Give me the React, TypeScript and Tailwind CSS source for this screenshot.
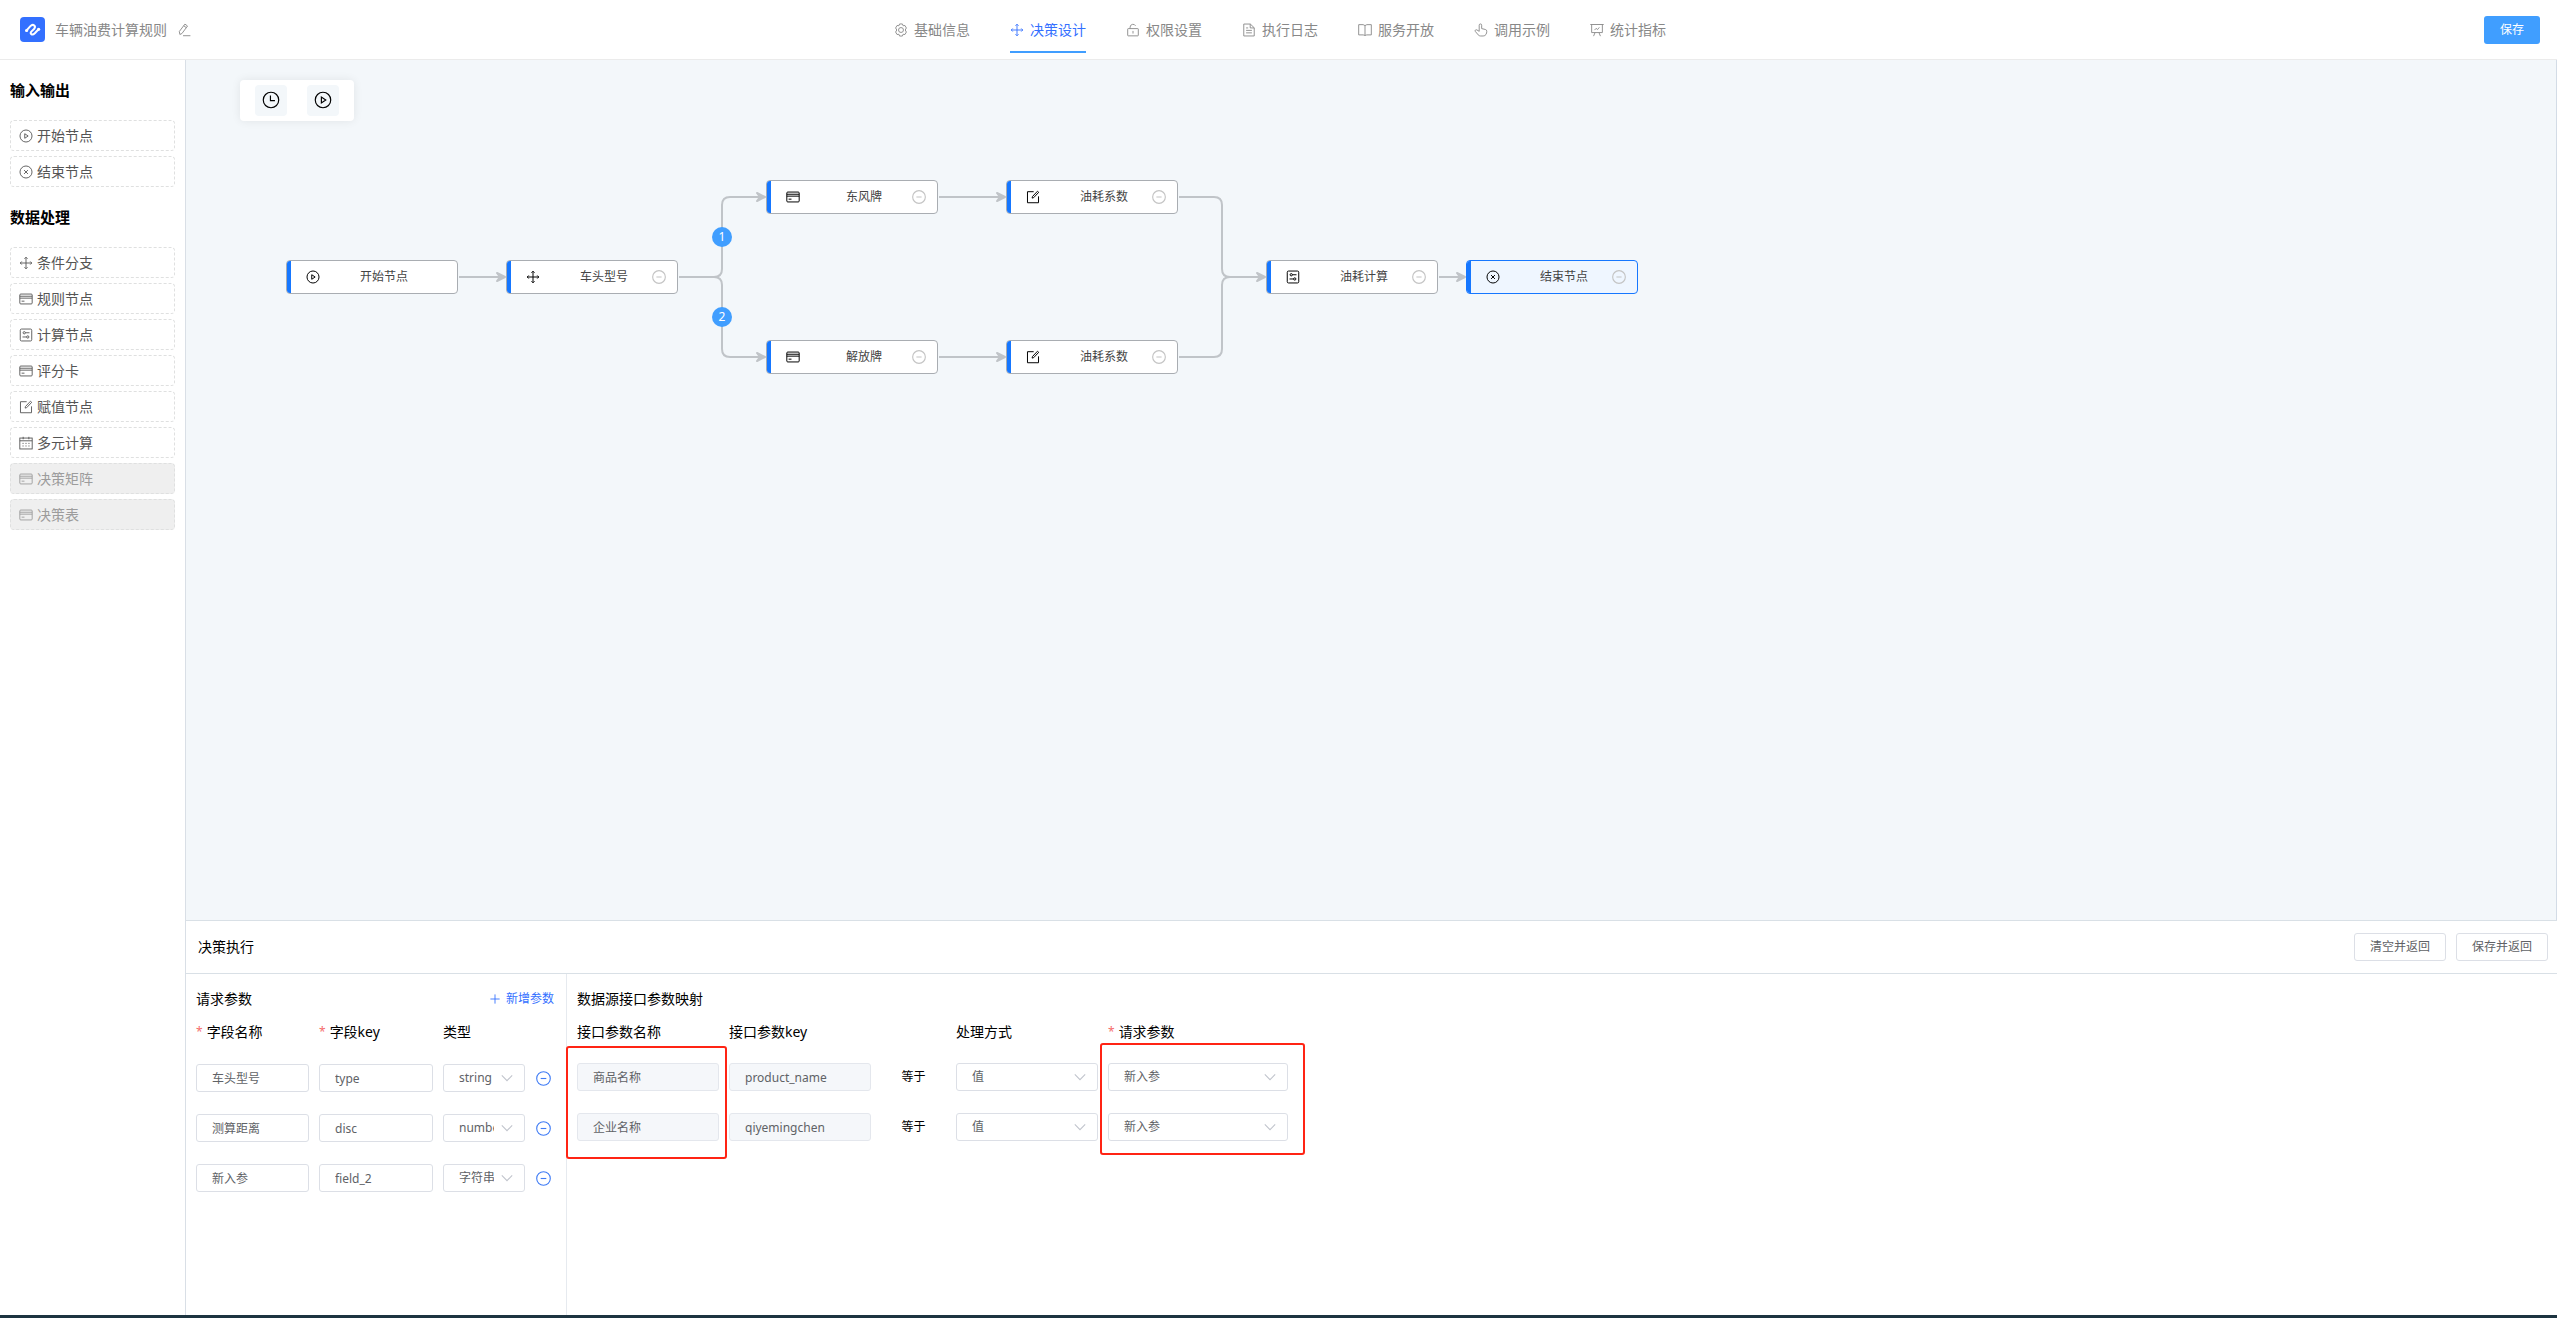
import React from 'react';

type IconName =
  | 'play' | 'close' | 'rank' | 'card' | 'setup' | 'edit' | 'date' | 'minus' | 'clock' | 'pen'
  | 'setting' | 'unlock' | 'document' | 'reading' | 'pointer' | 'board' | 'plus' | 'down';

const SHAPES: Record<IconName, React.ReactNode> = {
  play: (
    <>
      <circle cx="512" cy="512" r="440" />
      <path d="M420 346v332l249-166z" />
    </>
  ),
  close: (
    <>
      <circle cx="512" cy="512" r="440" />
      <path d="M370 370l284 284M654 370L370 654" />
    </>
  ),
  rank: (
    <path d="M512 100v824M100 512h824M400 200l112-112 112 112M400 824l112 112 112-112M200 400L88 512l112 112M824 400l112 112-112 112" />
  ),
  card: (
    <>
      <rect x="60" y="150" width="904" height="724" rx="70" />
      <path d="M60 310h904M60 450h904M190 670h210" />
    </>
  ),
  setup: (
    <>
      <rect x="92" y="76" width="840" height="872" rx="90" />
      <circle cx="384" cy="348" r="84" />
      <path d="M468 348h300M256 656h300" />
      <circle cx="640" cy="656" r="84" />
    </>
  ),
  edit: (
    <>
      <path d="M560 124H108v808h808V464" />
      <path d="M470 480L840 90l90 80-370 390-110 32z" />
    </>
  ),
  date: (
    <>
      <rect x="60" y="150" width="904" height="798" />
      <path d="M60 350h904M304 60v180M720 60v180" />
      <path d="M256 540h80M472 540h80M688 540h80M256 730h80M472 730h80M688 730h80" />
    </>
  ),
  minus: (
    <>
      <circle cx="512" cy="512" r="464" />
      <path d="M320 512h384" />
    </>
  ),
  clock: (
    <>
      <circle cx="512" cy="512" r="440" />
      <path d="M480 256v288h256" />
    </>
  ),
  pen: (
    <>
      <path d="M210 840L170 620 580 80l190 140-410 550zM490 200l190 140" />
      <path d="M440 930h540" />
    </>
  ),
  setting: (
    <>
      <path d="M410 70h204l50 130 140-16 102 180-86 148 86 148-102 180-140-16-50 130H410l-50-130-140 16-102-180 86-148-86-148 102-180 140 16z" />
      <circle cx="512" cy="512" r="180" />
    </>
  ),
  unlock: (
    <>
      <rect x="124" y="410" width="776" height="530" rx="40" />
      <path d="M300 410V300a212 212 0 0 1 400-90M512 580v190" />
    </>
  ),
  document: (
    <>
      <path d="M130 76h480l284 274v598H130z" />
      <path d="M600 76v284h294M300 360h150M300 540h424M300 720h424" />
    </>
  ),
  reading: (
    <path d="M512 190v720M512 190L380 120H50v750h330l132 40 132-40h330V120H644z" />
  ),
  pointer: (
    <path d="M380 610V160a90 90 0 0 1 180 0v250l270 64a130 130 0 0 1 104 136c0 160-70 340-260 340H490c-100 0-170-50-230-140L90 610c-40-70 40-150 120-105l170 105" />
  ),
  board: (
    <>
      <path d="M20 110h984M120 110v590h784V110M370 700L260 960M654 700l110 260" />
      <path d="M330 520l120-130 100 90 130-160" />
    </>
  ),
  plus: <path d="M512 40v944M40 512h944" />,
  down: <path d="M70 290l442 450 442-450" />,
};

function Icon({ name, className = 'size-3.5', weight = 66 }: { name: IconName; className?: string; weight?: number }) {
  return (
    <svg viewBox="0 0 1024 1024" fill="none" stroke="currentColor" strokeWidth={weight} className={`${className} shrink-0`} aria-hidden="true">
      {SHAPES[name]}
    </svg>
  );
}

const TABS: { icon: IconName; label: string }[] = [
  { icon: 'setting', label: '基础信息' },
  { icon: 'rank', label: '决策设计' },
  { icon: 'unlock', label: '权限设置' },
  { icon: 'document', label: '执行日志' },
  { icon: 'reading', label: '服务开放' },
  { icon: 'pointer', label: '调用示例' },
  { icon: 'board', label: '统计指标' },
];

function Header() {
  return (
    <header className="grid h-15 shrink-0 grid-cols-[1fr_auto_1fr] items-center border-b border-[#ebebeb] bg-white pr-[17px] pl-5">
      <div className="flex items-center">
        <svg viewBox="0 0 25 25" className="size-[25px]" aria-hidden="true">
          <rect width="25" height="25" rx="4" fill="#3370ff" />
          <path
            d="M6.6 13.4L10.4 9.2Q12.4 7 14.3 8.5Q15.8 9.9 14 12L11.3 14.6Q10 16.2 11.3 17.2Q12.8 18.2 14.8 16.2L18.6 12.2"
            fill="none" stroke="#fff" strokeWidth="2" strokeLinecap="round" strokeLinejoin="round"
          />
          <circle cx="6.6" cy="13.5" r="1.6" fill="#fff" />
          <circle cx="18.6" cy="12.3" r="1.6" fill="#fff" />
        </svg>
        <h1 className="ml-2.5 text-sm text-[#888]">车辆油费计算规则</h1>
        <button type="button" aria-label="编辑名称" className="ml-2.5 text-[#888]">
          <Icon name="pen" />
        </button>
      </div>
      <nav className="flex h-full gap-10">
        {TABS.map((t) => (
          <a
            key={t.label}
            href="#"
            className={
              t.label === '决策设计'
                ? 'relative flex items-center gap-1.5 text-sm text-[#3370ff] after:absolute after:inset-x-0 after:bottom-1.5 after:h-0.5 after:bg-[#409eff]'
                : 'flex items-center gap-1.5 text-sm text-[#888]'
            }
          >
            <Icon name={t.icon} />
            {t.label}
          </a>
        ))}
      </nav>
      <button type="button" className="h-7 justify-self-end rounded-[3px] bg-[#409eff] px-4 text-xs text-white">
        保存
      </button>
    </header>
  );
}

type Item = { icon: IconName; label: string; disabled?: boolean };

const IO_ITEMS: Item[] = [
  { icon: 'play', label: '开始节点' },
  { icon: 'close', label: '结束节点' },
];

const DATA_ITEMS: Item[] = [
  { icon: 'rank', label: '条件分支' },
  { icon: 'card', label: '规则节点' },
  { icon: 'setup', label: '计算节点' },
  { icon: 'card', label: '评分卡' },
  { icon: 'edit', label: '赋值节点' },
  { icon: 'date', label: '多元计算' },
  { icon: 'card', label: '决策矩阵', disabled: true },
  { icon: 'card', label: '决策表', disabled: true },
];

function Palette({ title, items }: { title: string; items: Item[] }) {
  return (
    <section>
      <h2 className="flex h-15 items-center text-[15px] font-bold text-black">{title}</h2>
      <ul className="flex flex-col gap-[5px]">
        {items.map((it) => (
          <li key={it.label} className="flex">
            <button
              type="button"
              disabled={it.disabled}
              className={
                it.disabled
                  ? 'flex h-[31px] w-full items-center gap-1 rounded border border-dashed border-[#dfe0e0] bg-[#efefef] pl-2 text-sm text-[#9c9c9c]'
                  : 'flex h-[31px] w-full items-center gap-1 rounded border border-dashed border-[#dfe0e0] bg-white pl-2 text-sm text-[#555]'
              }
            >
              <Icon name={it.icon} />
              {it.label}
            </button>
          </li>
        ))}
      </ul>
    </section>
  );
}

type FlowNode = { id: string; x: number; y: number; icon: IconName; label: string; removable: boolean; active?: boolean };

const NODES: FlowNode[] = [
  { id: 'start', x: 100, y: 200, icon: 'play', label: '开始节点', removable: false },
  { id: 'cond', x: 320, y: 200, icon: 'rank', label: '车头型号', removable: true },
  { id: 'rule1', x: 580, y: 120, icon: 'card', label: '东风牌', removable: true },
  { id: 'rule2', x: 580, y: 280, icon: 'card', label: '解放牌', removable: true },
  { id: 'set1', x: 820, y: 120, icon: 'edit', label: '油耗系数', removable: true },
  { id: 'set2', x: 820, y: 280, icon: 'edit', label: '油耗系数', removable: true },
  { id: 'calc', x: 1080, y: 200, icon: 'setup', label: '油耗计算', removable: true },
  { id: 'end', x: 1280, y: 200, icon: 'close', label: '结束节点', removable: true, active: true },
];

const EDGES = [
  'M273 217H314',
  'M493 217H528Q536 217 536 209V145Q536 137 544 137H574',
  'M493 217H528Q536 217 536 225V289Q536 297 544 297H574',
  'M753 137H814',
  'M753 297H814',
  'M993 137H1028Q1036 137 1036 145V209Q1036 217 1044 217H1074',
  'M993 297H1028Q1036 297 1036 289V225Q1036 217 1044 217H1074',
  'M1253 217H1274',
];

const ARROWS = [[320, 217], [580, 137], [580, 297], [820, 137], [820, 297], [1080, 217], [1280, 217]];

function NodeBox({ node }: { node: FlowNode }) {
  return (
    <div
      style={{ left: node.x, top: node.y }}
      className={
        node.active
          ? 'absolute flex h-[34px] w-[172px] items-center overflow-hidden rounded border border-[#1677ff] bg-[#eff6ff]'
          : 'absolute flex h-[34px] w-[172px] items-center overflow-hidden rounded border border-[#a9adb2] bg-white'
      }
    >
      <span className="h-full w-1 shrink-0 bg-[#1677ff]" />
      <span className="ml-[15px] flex text-black">
        <Icon name={node.icon} weight={72} />
      </span>
      <span className="ml-4 flex-1 text-center text-xs text-[#444]">{node.label}</span>
      <span className="mr-[11px] flex size-3.5">
        {node.removable && (
          <button type="button" aria-label={`删除${node.label}`} className="text-[#c4c4c4]">
            <Icon name="minus" weight={84} />
          </button>
        )}
      </span>
    </div>
  );
}

function Canvas() {
  return (
    <div className="relative min-h-0 flex-1 overflow-hidden border-r border-[#d3dce6] bg-[#f3f7fa]">
      <svg className="absolute inset-0 size-full" aria-hidden="true">
        <g fill="none" stroke="#c0c4c8" strokeWidth="2">
          {EDGES.map((d) => (
            <path key={d} d={d} />
          ))}
        </g>
        <g fill="#c0c4c8" stroke="#c0c4c8" strokeWidth="2" strokeLinejoin="round">
          {ARROWS.map(([x, y]) => (
            <path key={`${x}-${y}`} d={`M${x - 1} ${y}l-8 -4 3 4 -3 4z`} />
          ))}
        </g>
      </svg>
      {NODES.map((n) => (
        <NodeBox key={n.id} node={n} />
      ))}
      <span className="absolute top-[167px] left-[526px] flex size-5 items-center justify-center rounded-full bg-[#409eff] text-xs text-white">1</span>
      <span className="absolute top-[247px] left-[526px] flex size-5 items-center justify-center rounded-full bg-[#409eff] text-xs text-white">2</span>
      <div className="absolute top-5 left-[54px] flex gap-5 rounded bg-white px-[15px] py-[5px] shadow-[0_0_10px_rgba(0,0,0,0.08)]">
        <button type="button" aria-label="历史" className="flex h-[31px] w-8 items-center justify-center rounded bg-[#f3f7fa] pb-0.5 text-black">
          <Icon name="clock" className="size-[18px]" />
        </button>
        <button type="button" aria-label="运行" className="flex h-[31px] w-8 items-center justify-center rounded bg-[#f3f7fa] pb-0.5 text-black">
          <Icon name="play" className="size-[18px]" />
        </button>
      </div>
    </div>
  );
}

function TextBox({ label, value, disabled }: { label: string; value: string; disabled?: boolean }) {
  return (
    <input
      aria-label={label}
      defaultValue={value}
      disabled={disabled}
      className="h-7 w-full min-w-0 rounded-[3px] border border-[#dcdfe6] bg-white px-[15px] text-xs text-[#606266] disabled:border-[#e4e7ed] disabled:bg-[#f5f7fa]"
    />
  );
}

function SelectBox({ label, value }: { label: string; value: string }) {
  return (
    <div className="relative">
      <select
        aria-label={label}
        defaultValue={value}
        className="block h-7 w-full appearance-none rounded-[3px] border border-[#dcdfe6] bg-white pr-[30px] pl-[15px] text-xs text-[#606266]"
      >
        <option>{value}</option>
      </select>
      <span className="pointer-events-none absolute inset-y-0 right-3 flex items-center text-[#c0c4cc]">
        <Icon name="down" className="size-3" weight={90} />
      </span>
    </div>
  );
}

function ColumnLabel({ text, required }: { text: string; required?: boolean }) {
  return (
    <span className="flex h-4 items-center gap-1">
      {required && <span className="text-xs text-[#f56c6c]">*</span>}
      {text}
    </span>
  );
}

const PARAMS = [
  ['车头型号', 'type', 'string'],
  ['测算距离', 'disc', 'number'],
  ['新入参', 'field_2', '字符串'],
];

const MAPPINGS = [
  ['商品名称', 'product_name'],
  ['企业名称', 'qiyemingchen'],
];

function RequestParams() {
  return (
    <section className="w-[381px] shrink-0 border-r border-[#e6eaef] pr-3 pl-2.5">
      <div className="flex h-[50px] items-center justify-between text-sm text-black">
        <h3>请求参数</h3>
        <button type="button" className="flex items-center gap-1.5 text-xs text-[#3370ff]">
          <Icon name="plus" className="size-2.5" weight={90} />
          新增参数
        </button>
      </div>
      <div className="grid grid-cols-[113px_114px_82px_16px] gap-x-2.5 text-sm text-black">
        <ColumnLabel text="字段名称" required />
        <ColumnLabel text="字段key" required />
        <ColumnLabel text="类型" />
      </div>
      <div className="mt-6 flex flex-col gap-[22px]">
        {PARAMS.map(([name, key, type]) => (
          <div key={key} className="grid grid-cols-[113px_114px_82px_16px] items-center gap-x-2.5">
            <TextBox label="字段名称" value={name} />
            <TextBox label="字段key" value={key} />
            <SelectBox label="类型" value={type} />
            <button type="button" aria-label={`删除${name}`} className="justify-self-end text-[#3f7bf5]">
              <Icon name="minus" className="size-[15px]" weight={76} />
            </button>
          </div>
        ))}
      </div>
    </section>
  );
}

function Mapping() {
  return (
    <section className="relative flex-1 pl-2.5">
      <h3 className="flex h-[50px] items-center text-sm text-black">数据源接口参数映射</h3>
      <div className="grid grid-cols-[142px_142px_65px_142px_180px] gap-x-2.5 text-sm text-black">
        <ColumnLabel text="接口参数名称" />
        <ColumnLabel text="接口参数key" />
        <span />
        <ColumnLabel text="处理方式" />
        <ColumnLabel text="请求参数" required />
      </div>
      <div className="mt-[23px] flex flex-col gap-[22px]">
        {MAPPINGS.map(([name, key]) => (
          <div key={key} className="grid grid-cols-[142px_142px_65px_142px_180px] items-center gap-x-2.5">
            <TextBox label="接口参数名称" value={name} disabled />
            <TextBox label="接口参数key" value={key} disabled />
            <span className="text-center text-xs text-black">等于</span>
            <SelectBox label="处理方式" value="值" />
            <SelectBox label="请求参数" value="新入参" />
          </div>
        ))}
      </div>
      <div className="pointer-events-none absolute top-[72px] -left-px h-[113px] w-[161px] rounded-[3px] border-2 border-[#ff2414]" />
      <div className="pointer-events-none absolute top-[69px] left-[533px] h-[112px] w-[205px] rounded-[3px] border-2 border-[#ff2414]" />
    </section>
  );
}

export default function App() {
  return (
    <div className="flex h-screen flex-col bg-white font-['Noto_Sans','Noto_Sans_CJK_SC',sans-serif]">
      <Header />
      <div className="flex min-h-0 flex-1">
        <aside className="w-[186px] shrink-0 border-r border-[#d9dfe6] px-2.5">
          <Palette title="输入输出" items={IO_ITEMS} />
          <Palette title="数据处理" items={DATA_ITEMS} />
        </aside>
        <main className="flex min-w-0 flex-1 flex-col">
          <Canvas />
          <div className="flex h-[395px] shrink-0 flex-col border-t border-[#d9e0e6]">
            <div className="flex h-[53px] shrink-0 items-center justify-between border-b border-[#d9e0e6] pr-[9px] pl-3">
              <h2 className="text-sm text-black">决策执行</h2>
              <div className="flex gap-2.5">
                <button type="button" className="h-7 rounded-[3px] border border-[#dcdfe6] bg-white px-[15px] text-xs text-[#606266]">清空并返回</button>
                <button type="button" className="h-7 rounded-[3px] border border-[#dcdfe6] bg-white px-[15px] text-xs text-[#606266]">保存并返回</button>
              </div>
            </div>
            <div className="flex min-h-0 flex-1">
              <RequestParams />
              <Mapping />
            </div>
          </div>
        </main>
      </div>
      <footer className="h-[3px] shrink-0 bg-[#1d3440]" />
    </div>
  );
}
